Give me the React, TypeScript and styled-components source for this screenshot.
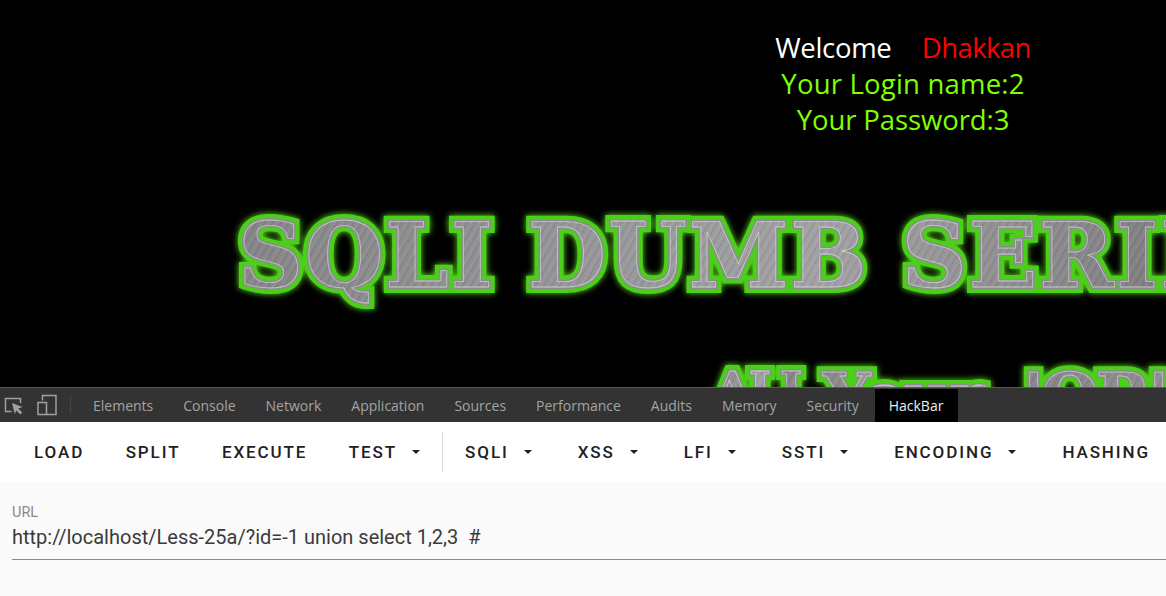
import React from "react";
import styled, { createGlobalStyle } from "styled-components";

const Global = createGlobalStyle`
  html, body { margin: 0; padding: 0; background: #000; height: 596px; overflow: hidden; }
`;
const Page = styled.div`display: flex; flex-direction: column; width: 1166px; height: 596px; overflow: hidden;`;
const Stage = styled.div`height: 387px; background: #000; overflow: hidden; flex: none;`;
const Canvas = styled.div`width: 1806px; display: flex; flex-direction: column; align-items: center; padding-top: 30px;`;
const Message = styled.div<{ $color: string; $track: number }>`
  font: 400 27.5px/36px "Open Sans", "Noto Sans", sans-serif;
  color: ${(p) => p.$color};
  white-space: pre;
  letter-spacing: ${(p) => p.$track}px;
`;
const Red = styled.span`color: #f00; margin-left: 3px; letter-spacing: -0.6px;`;
const TitleLine = styled.div`align-self: flex-start; margin: 68px 0 0 238px;`;
const SubLine = styled.div`align-self: flex-start; margin: 55px 0 0 714px; display: flex; align-items: flex-start;`;
const Metal = styled.div<{ $size: number; $track: number; $top?: number; $left?: number }>`
  position: relative;
  flex: none;
  margin-top: ${(p) => p.$top ?? 0}px;
  margin-left: ${(p) => p.$left ?? 0}px;
  font: 700 ${(p) => p.$size}px/1.1 "DejaVu Serif", serif;
  white-space: nowrap;
  color: #4ccf1a;
  -webkit-text-stroke: 12px #4ccf1a;
  filter: drop-shadow(0 0 3px #5fe020);
  letter-spacing: ${(p) => p.$track}px;
  &::before, &::after {
    content: attr(data-text);
    position: absolute;
    inset: 0;
  }
  &::before {
    color: #8c8c8f;
    -webkit-text-stroke: 4px #8c8c8f;
  }
  &::after {
    -webkit-text-stroke: 0.8px rgba(232, 236, 232, 0.6);
    color: transparent;
    background-color: #929295;
    background-image:
      repeating-linear-gradient(120deg, rgba(255,255,255,.08) 0 1px, transparent 1px 3px, rgba(0,0,0,.08) 3px 4px, transparent 4px 7px),
      linear-gradient(100deg, #858588, #a2a2a5 45%, #808083 70%, #aaaaad);
    -webkit-background-clip: text;
    background-clip: text;
  }
`;
const Tabs = styled.div`
  height: 34px; flex: none; background: #333; border-top: 1px solid #5a5a5a;
  display: flex; align-items: stretch;
  font: 400 14px "Open Sans", "Noto Sans", sans-serif;
`;
const IconSlot = styled.div`
  display: flex; align-items: center; gap: 13px; width: 71px; padding-left: 4px; box-sizing: border-box; margin-right: 7px;
  position: relative;
  &::after { content: ""; position: absolute; right: 0; top: 8px; height: 18px; width: 1px; background: #444; }
`;
const Tab = styled.div<{ $active?: boolean }>`
  display: flex; align-items: center; padding: 0 15px 0 ${(p) => (p.$active ? 14 : 15)}px;
  color: ${(p) => (p.$active ? "#eee" : "#a3a3a3")};
  background: ${(p) => (p.$active ? "#000" : "transparent")};
  margin: ${(p) => (p.$active ? "1px 0 0 1px" : "0")};
`;
const Toolbar = styled.div`
  height: 60px; flex: none; background: #fff; display: flex; align-items: center; padding-left: 34px;
  gap: 41.5px; overflow: hidden; white-space: nowrap;
  font: 500 17px "Roboto", sans-serif; letter-spacing: 1.9px; color: #212121;
`;
const Btn = styled.div`display: flex; align-items: center; flex: none;`;
const Caret = styled.span`
  width: 0; height: 0; margin: 0 4.5px 0 15px; border: 4.5px solid transparent; border-top-color: #212121; border-bottom: 0;
`;
const Divider = styled.div`width: 1px; height: 40px; background: #dcdcdc; margin: 0 -19.5px 0 -24px; flex: none;`;
const Body = styled.div`flex: 1; background: #fafafa; padding: 23px 0 0 12px;`;
const Label = styled.div`font: 400 14.5px/16px "Roboto", sans-serif; color: #8a8a8a;`;
const Field = styled.div`
  margin-top: 1px; height: 38px; box-sizing: border-box; padding-top: 3px; border-bottom: 1px solid #8a8a8a;
  font: 400 20px/24px "Roboto", sans-serif; color: #3a3a3a; white-space: pre;
`;

const tabs = ["Elements", "Console", "Network", "Application", "Sources", "Performance", "Audits", "Memory", "Security"];
const items: [string, boolean][] = [["SQLI", true], ["XSS", true], ["LFI", true], ["SSTI", true], ["ENCODING", true], ["HASHING", false]];
const title = "SQLI DUMB SERIES-25A";

export default function App() {
  return (
    <Page>
      <Global />
      <Stage>
        <Canvas>
          <Message $color="#fff" $track={-0.3}>Welcome    <Red>Dhakkan</Red></Message>
          <Message $color="#7fff00" $track={0.2}>Your Login name:2</Message>
          <Message $color="#7fff00" $track={-0.1}>Your Password:3</Message>
          <TitleLine><Metal $size={90} $track={2} data-text={title}>{title}</Metal></TitleLine>
          <SubLine>
            <Metal $size={48} $track={-2.5} $top={4} data-text="ALL">ALL</Metal>
            <Metal $size={66} $track={-2.5} $top={1} $left={12} data-text="Your">Your</Metal>
            <Metal $size={66} $track={-2.5} $top={1} $left={42} data-text="'OR' and 'AND' belong to us">'OR' and 'AND' belong to us</Metal>
          </SubLine>
        </Canvas>
      </Stage>
      <Tabs>
        <IconSlot>
          <svg width="20" height="22" viewBox="0 0 20 22" fill="none" stroke="#a0a0a0" strokeWidth="1.5">
            <path d="M7.5 17.5H1.5V4.5h15v4.5" />
            <path d="M8 9l10.5 4-4.3 1.6 4 4-1.8 1.8-4-4L10.800 20z" fill="#a0a0a0" stroke="none" />
          </svg>
          <svg width="20" height="22" viewBox="0 0 20 22" fill="none" stroke="#a0a0a0" strokeWidth="1.5">
            <path d="M5.500 6.500V1.500h13.500v19H9.500" />
            <rect x="1" y="8.500" width="8.500" height="12" />
          </svg>
        </IconSlot>
        {tabs.map((t) => <Tab key={t}>{t}</Tab>)}
        <Tab $active>HackBar</Tab>
      </Tabs>
      <Toolbar>
        <Btn>LOAD</Btn>
        <Btn>SPLIT</Btn>
        <Btn>EXECUTE</Btn>
        <Btn>TEST<Caret /></Btn>
        <Divider />
        {items.map(([t, c]) => <Btn key={t}>{t}{c && <Caret />}</Btn>)}
      </Toolbar>
      <Body>
        <Label>URL</Label>
        <Field>http://localhost/Less-25a/?id=-1 union select 1,2,3  #</Field>
      </Body>
    </Page>
  );
}
